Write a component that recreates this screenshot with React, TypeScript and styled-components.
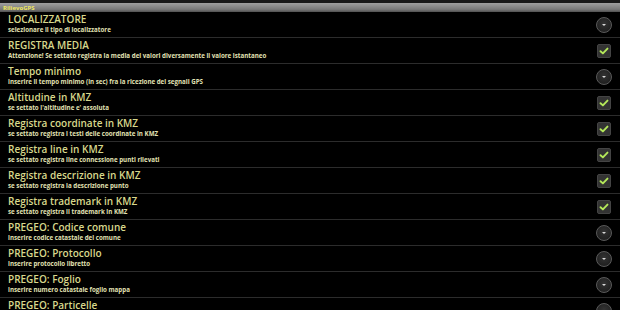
import React from "react";
import styled, { createGlobalStyle } from "styled-components";

const Global = createGlobalStyle`
  html, body { margin: 0; padding: 0; background: #000; overflow: hidden; }
  body { font-family: "Open Sans", "DejaVu Sans", sans-serif; }
`;

const Screen = styled.div`
  width: 620px;
  height: 310px;
  background: #000;
  display: flex;
  flex-direction: column;
  overflow: hidden;
`;

const StatusStrip = styled.div`
  height: 3px;
  background: #1a1a1a;
  flex: none;
`;

const TitleBar = styled.div`
  height: 9px;
  flex: none;
  background: linear-gradient(#a0a0a0, #7a7a7a 70%, #505050);
  display: flex;
  align-items: center;
  padding-left: 3px;
  font-size: 6px;
  font-weight: 700;
  color: #f0e860;
  line-height: 1;
`;

const List = styled.div`
  display: flex;
  flex-direction: column;
`;

const Row = styled.div`
  height: 25px;
  flex: none;
  border-bottom: 1px solid #2c2c2c;
  display: flex;
  align-items: center;
  padding: 0 8px;
`;

const Texts = styled.div`
  flex: 1;
  display: flex;
  flex-direction: column;
  margin-top: -1px;
`;

const Title = styled.div`
  font-size: 10px;
  font-weight: 600;
  color: #d8d88c;
  line-height: 13px;
`;

const Sub = styled.div`
  font-size: 6.2px;
  font-weight: 700;
  color: #e2e2b4;
  line-height: 8.5px;
`;

const Widget = styled.div`
  width: 16px;
  height: 16px;
  display: flex;
  align-items: center;
  justify-content: center;
`;

const Spinner = styled.div`
  width: 14px;
  height: 14px;
  border-radius: 50%;
  background: radial-gradient(circle at 50% 40%, #333, #1a1a1a);
  border: 1px solid #5a5a5a;
  display: flex;
  align-items: center;
  justify-content: center;
`;

const Check = styled.div`
  width: 14px;
  height: 14px;
  border-radius: 2px;
  background: #333;
  border: 1px solid #444;
  box-sizing: border-box;
  display: flex;
  align-items: center;
  justify-content: center;
`;

type Item = { title: string; sub: string; kind: "list" | "check" };

const items: Item[] = [
  { title: "LOCALIZZATORE", sub: "selezionare il tipo di localizzatore", kind: "list" },
  { title: "REGISTRA MEDIA", sub: "Attenzione! Se settato registra la media dei valori diversamente il valore istantaneo", kind: "check" },
  { title: "Tempo minimo", sub: "inserire il tempo minimo (in sec) fra la ricezione dei segnali GPS", kind: "list" },
  { title: "Altitudine in KMZ", sub: "se settato l'altitudine e' assoluta", kind: "check" },
  { title: "Registra coordinate in KMZ", sub: "se settato registra i testi delle coordinate in KMZ", kind: "check" },
  { title: "Registra line in KMZ", sub: "se settato registra line connessione punti rilevati", kind: "check" },
  { title: "Registra descrizione in KMZ", sub: "se settato registra la descrizione punto", kind: "check" },
  { title: "Registra trademark in KMZ", sub: "se settato registra il trademark in KMZ", kind: "check" },
  { title: "PREGEO: Codice comune", sub: "inserire codice catastale del comune", kind: "list" },
  { title: "PREGEO: Protocollo", sub: "inserire protocollo libretto", kind: "list" },
  { title: "PREGEO: Foglio", sub: "inserire numero catastale foglio mappa", kind: "list" },
  { title: "PREGEO: Particelle", sub: "inserire particelle", kind: "list" },
];

const SpinnerIcon = () => (
  <Spinner>
    <svg width="6" height="4" viewBox="0 0 6 4">
      <polygon points="1,1 5,1 3,3" fill="#d8d8d8" />
    </svg>
  </Spinner>
);

const CheckIcon = () => (
  <Check>
    <svg width="10" height="8" viewBox="0 0 10 8">
      <path d="M1.5 4.2 L3.9 6.4 L8.5 1.6" fill="none" stroke="#b4e85a" strokeWidth="1.9" strokeLinecap="round" strokeLinejoin="round" />
    </svg>
  </Check>
);

export default function App() {
  return (
    <Screen>
      <Global />
      <StatusStrip />
      <TitleBar>RilievoGPS</TitleBar>
      <List>
        {items.map((it) => (
          <Row key={it.title}>
            <Texts>
              <Title>{it.title}</Title>
              <Sub>{it.sub}</Sub>
            </Texts>
            <Widget>{it.kind === "list" ? <SpinnerIcon /> : <CheckIcon />}</Widget>
          </Row>
        ))}
      </List>
    </Screen>
  );
}
